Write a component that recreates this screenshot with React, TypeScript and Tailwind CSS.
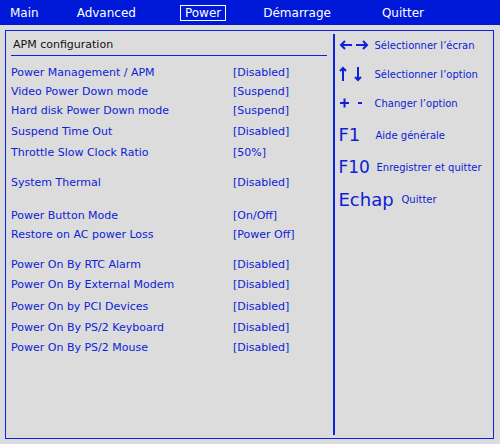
const rows = [
  { label: "Power Management / APM", value: "[Disabled]", gap: "mt-0" },
  { label: "Video Power Down mode", value: "[Suspend]", gap: "mt-[1px]" },
  { label: "Hard disk Power Down mode", value: "[Suspend]", gap: "mt-[1px]" },
  { label: "Suspend Time Out", value: "[Disabled]", gap: "mt-[3px]" },
  { label: "Throttle Slow Clock Ratio", value: "[50%]", gap: "mt-[3px]" },
  { label: "System Thermal", value: "[Disabled]", gap: "mt-[12px]" },
  { label: "Power Button Mode", value: "[On/Off]", gap: "mt-[15px]" },
  { label: "Restore on AC power Loss", value: "[Power Off]", gap: "mt-[1px]" },
  { label: "Power On By RTC Alarm", value: "[Disabled]", gap: "mt-[12px]" },
  { label: "Power On By External Modem", value: "[Disabled]", gap: "mt-[2px]" },
  { label: "Power On by PCI Devices", value: "[Disabled]", gap: "mt-[4px]" },
  { label: "Power On By PS/2 Keyboard", value: "[Disabled]", gap: "mt-[3px]" },
  { label: "Power On By PS/2 Mouse", value: "[Disabled]", gap: "mt-[2px]" },
];

const ArrowsLR = () => (
  <svg width="30" height="12" viewBox="0 0 30 12" fill="none" stroke="currentColor" strokeWidth="2">
    <path d="M2 6h11M6 2L2 6l4 4" />
    <path d="M17 6h11M24 2l4 4-4 4" />
  </svg>
);

const ArrowsUD = () => (
  <svg width="24" height="16" viewBox="0 0 24 16" fill="none" stroke="currentColor" strokeWidth="2">
    <path d="M4 15V2M1 5l3-3 3 3" />
    <path d="M19 1v13M16 11l3 3 3-3" />
  </svg>
);

const PlusMinus = () => (
  <svg width="26" height="12" viewBox="0 0 26 12" fill="none" stroke="currentColor" strokeWidth="2">
    <path d="M1 6h9M5.5 1.5v9" />
    <path d="M19 6h4" />
  </svg>
);

export default function App() {
  return (
    <div
      className="w-[500px] h-[444px] bg-[#dcdcdc] flex flex-col text-[#0c22d6]"
      style={{ fontFamily: '"DejaVu Sans", Verdana, sans-serif' }}
    >
      <header className="h-[25px] bg-[#0019d8] flex items-center text-white text-[12px] leading-none shrink-0">
        <span className="ml-[10px]">Main</span>
        <span className="ml-[38px]">Advanced</span>
        <span className="ml-[44px] border border-white px-[4px] py-[1px]">Power</span>
        <span className="ml-[37px]">Démarrage</span>
        <span className="ml-[51px]">Quitter</span>
      </header>

      <div className="flex-1 pt-[5px] pl-[5px] pr-[6px] pb-[5px]">
        <div className="h-full border-[1.5px] border-[#0a22e6] flex">
          <section className="w-[327px] flex flex-col pl-[5px] pr-[1px]">
            <div className="mt-[5px] ml-[2px] h-[17px] text-[11px] leading-[17px] text-[#111]">
              APM configuration
            </div>
            <div className="mt-[2px] h-px bg-[#0a22e6] w-[316px]" />
            <div className="mt-[8px] flex flex-col text-[11px]">
              {rows.map((r) => (
                <div key={r.label} className={`${r.gap} h-[18px] leading-[18px] flex`}>
                  <span className="w-[222px]">{r.label}</span>
                  <span>{r.value}</span>
                </div>
              ))}
            </div>
          </section>

          <div className="my-[3px] w-[1.5px] bg-[#0a22e6]" />

          <aside className="flex-1 flex flex-col pl-[4px] text-[10px]">
            <div className="mt-[6px] h-[16px] flex items-center">
              <span className="w-[36px] flex"><ArrowsLR /></span>
              <span>Sélectionner l’écran</span>
            </div>
            <div className="mt-[13px] h-[16px] flex items-center">
              <span className="w-[36px] flex"><ArrowsUD /></span>
              <span>Sélectionner l’option</span>
            </div>
            <div className="mt-[13px] h-[16px] flex items-center">
              <span className="w-[36px] flex"><PlusMinus /></span>
              <span>Changer l’option</span>
            </div>
            <div className="mt-[13px] h-[22px] flex items-center">
              <span className="w-[37px] text-[18px] leading-none">F1</span>
              <span>Aide générale</span>
            </div>
            <div className="mt-[10px] h-[22px] flex items-center">
              <span className="w-[38px] text-[17px] leading-none">F10</span>
              <span>Enregistrer et quitter</span>
            </div>
            <div className="mt-[10px] h-[24px] flex items-center">
              <span className="w-[63px] text-[18px] leading-none">Echap</span>
              <span className="leading-none">Quitter</span>
            </div>
          </aside>
        </div>
      </div>
    </div>
  );
}
